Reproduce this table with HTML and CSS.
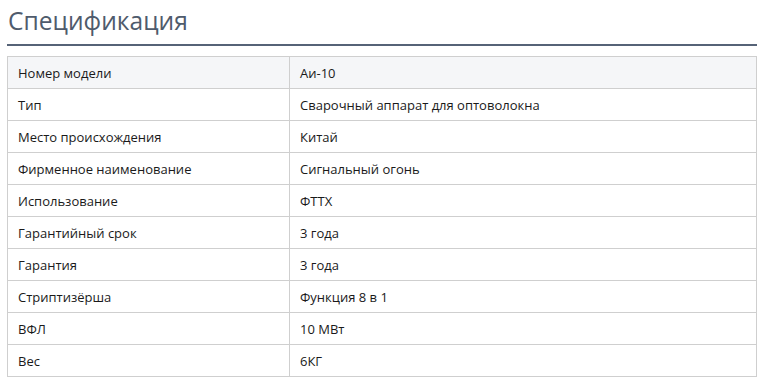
FILE: index.html
```html
<!DOCTYPE html>
<html lang="ru">
<head>
<meta charset="utf-8">
<link rel="stylesheet" href="styles.css">
</head>
<body>
<section class="spec">
  <h2 class="spec-title">Спецификация</h2>
  <table class="spec-table">
    <tbody>
      <tr class="head"><td>Номер модели</td><td>Аи-10</td></tr>
      <tr><td>Тип</td><td>Сварочный аппарат для оптоволокна</td></tr>
      <tr><td>Место происхождения</td><td>Китай</td></tr>
      <tr><td>Фирменное наименование</td><td>Сигнальный огонь</td></tr>
      <tr><td>Использование</td><td>ФТТХ</td></tr>
      <tr><td>Гарантийный срок</td><td>3 года</td></tr>
      <tr><td>Гарантия</td><td>3 года</td></tr>
      <tr><td>Стриптизёрша</td><td>Функция 8 в 1</td></tr>
      <tr><td>ВФЛ</td><td>10 МВт</td></tr>
      <tr><td>Вес</td><td>6КГ</td></tr>
    </tbody>
  </table>
</section>
</body>
</html>
```
FILE: styles.css
```css
html, body {
  margin: 0;
  padding: 0;
  background: #ffffff;
}
.spec {
  width: 750px;
  padding: 0 0 0 7px;
  font-family: "Open Sans", "Noto Sans", sans-serif;
}
.spec-title {
  margin: 0;
  padding: 5px 0 0 1px;
  box-sizing: border-box;
  height: 45px;
  font-size: 24.6px;
  font-weight: 400;
  line-height: 32px;
  color: #4f5b6c;
  border-bottom: 2px solid #566377;
}
.spec-title {
  height: 46px;
}
.spec-table {
  margin-top: 10px;
  width: 750px;
  border-collapse: collapse;
  font-size: 13px;
  color: #1a1a1a;
}
.spec-table td {
  height: 32px;
  padding: 1px 10px 0;
  border: 1px solid #cfcfcf;
  box-sizing: border-box;
  vertical-align: middle;
  line-height: 16px;
}
.spec-table td:first-child {
  width: 282px;
}
.spec-table tr.head td {
  background: #f5f6f8;
}
```
